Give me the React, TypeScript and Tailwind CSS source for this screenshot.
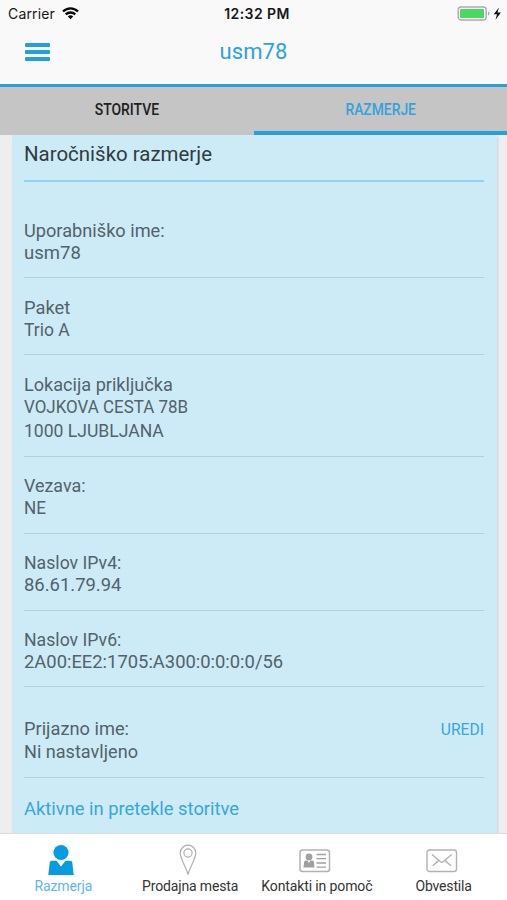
import React from "react";

type Line = { text: string; fit: string };

const rows: { className: string; lines: Line[] }[] = [
  { className: "h-[96px] pt-[38px]", lines: [{ text: "Uporabniško ime:", fit: "scale-x-[0.957]" }, { text: "usm78", fit: "scale-x-[0.975]" }] },
  { className: "h-[77px] pt-[19px]", lines: [{ text: "Paket", fit: "scale-x-[0.965]" }, { text: "Trio A", fit: "scale-x-[0.92]" }] },
  { className: "h-[102px] pt-[19px]", lines: [{ text: "Lokacija priključka", fit: "scale-x-[0.953]" }, { text: "VOJKOVA CESTA 78B", fit: "scale-x-[0.892]" }, { text: "1000 LJUBLJANA", fit: "mt-[2px] scale-x-[0.924]" }] },
  { className: "h-[77px] pt-[18px]", lines: [{ text: "Vezava:", fit: "scale-x-[0.94]" }, { text: "NE", fit: "scale-x-[0.9]" }] },
  { className: "h-[77px] pt-[18px]", lines: [{ text: "Naslov IPv4:", fit: "scale-x-[0.93]" }, { text: "86.61.79.94", fit: "scale-x-[0.97]" }] },
  { className: "h-[76px] pt-[18px]", lines: [{ text: "Naslov IPv6:", fit: "scale-x-[0.93]" }, { text: "2A00:EE2:1705:A300:0:0:0:0/56", fit: "scale-x-[0.967]" }] },
];

function TextLine({ text, fit }: Line) {
  return <div className={`h-[22px] origin-left whitespace-nowrap leading-[22px] ${fit}`}>{text}</div>;
}

function StatusBar() {
  return (
    <div className="grid h-[27px] grid-cols-3 items-center text-[#161616]">
      <div className="flex items-center gap-[7px] pl-[8px]">
        <span className="font-['Inter'] text-[14px] tracking-[0.15px]">Carrier</span>
        <svg width="17" height="13" viewBox="0 0 17 13" fill="none" stroke="#080808" strokeWidth="2.4">
          <path d="M1 4.5C5.2 .3 11.8 .3 16 4.5M3.7 7.4c2.7-2.6 6.9-2.6 9.6 0" />
          <path d="M5.8 9.4c1.6-1.4 3.8-1.4 5.4 0L8.5 12.3z" fill="#080808" stroke="none" />
        </svg>
      </div>
      <div className="whitespace-nowrap pl-[7px] text-center font-['Inter'] text-[14px] font-semibold tracking-[0.4px]">12:32 PM</div>
      <svg className="justify-self-end" width="50" height="18" viewBox="0 0 50 18">
        <rect x="1.2" y="2" width="28" height="13" rx="3" fill="#fff" stroke="#aaa" strokeWidth="1.4" />
        <rect x="3" y="4" width="24" height="9" rx="1" fill="#4bd964" />
        <path d="M31 6.5c2 .6 2 3.4 0 4z" fill="#aaa" />
        <path d="M42 2.5 36.7 9.3h3.3l-1.5 5.5 5.4-7.2h-3.4z" fill="#111" />
      </svg>
    </div>
  );
}

function PersonIcon() {
  return (
    <svg width="26" height="32" viewBox="0 0 26 32" fill="#079be2">
      <circle cx="13" cy="8.5" r="7.6" />
      <path d="M4 16.8h4.5L13 22.5l4.5-5.7H22c1.5 0 2 .7 2.3 2L25.7 31H.3L1.7 18.8c.3-1.3.8-2 2.3-2z" />
      <path d="m10.4 16.7 2.6 5.8 2.6-5.8z" fill="#fff" />
    </svg>
  );
}

function PinIcon() {
  return (
    <svg width="18" height="32" viewBox="0 0 18 32" fill="none" stroke="#b0b0b0" strokeWidth="1.2">
      <path d="M9 30.5C7.5 24 1.2 14.5 1.2 9a7.8 7.8 0 0 1 15.6 0C16.8 14.5 10.5 24 9 30.5z" />
      <circle cx="9" cy="9" r="4.1" />
    </svg>
  );
}

function ContactIcon() {
  return (
    <svg width="32" height="24" viewBox="0 0 32 24">
      <rect x="1" y="1" width="29.5" height="21.5" rx="2.5" fill="none" stroke="#b2b2b2" strokeWidth="1.5" />
      <circle cx="10" cy="8" r="3.4" fill="#a0a0a0" />
      <path d="M6.5 11.5h2L10 14l1.5-2.5h2q1.3 0 1.4 1.5l.6 5.5h-11l.6-5.5q.1-1.5 1.4-1.5z" fill="#a0a0a0" />
      <path d="M17.5 5.5h9.5M17.5 9.7h9.5M17.5 14h9.5M17.5 18.2h9.5" stroke="#a0a0a0" strokeWidth="1.3" />
    </svg>
  );
}

function MailIcon() {
  return (
    <svg width="32" height="24" viewBox="0 0 32 24" fill="none" stroke="#b2b2b2" strokeWidth="1.4">
      <rect x="1" y="1" width="29.5" height="21.5" rx="2.5" />
      <path d="m6 5.5 8.5 7.2q1.3 1 2.6 0l8.5-7.2M6.7 16.8l6-5.2M25 16.8l-6-5.2" />
    </svg>
  );
}

export default function App() {
  return (
    <div className="flex h-[900px] w-[507px] flex-col overflow-hidden bg-[#eeeeee] font-['Roboto','Liberation_Sans',sans-serif]">
      <header className="h-[87px] shrink-0 border-b-[3px] border-[#2b9fdb] bg-[#f9f9f9]">
        <StatusBar />
        <div className="grid h-[50px] grid-cols-[1fr_auto_1fr] items-center">
          <div className="ml-[25px] flex w-[25px] flex-col gap-[3px]">
            <span className="h-[4px] rounded-[1px] bg-[#249fdd]" />
            <span className="h-[4px] rounded-[1px] bg-[#249fdd]" />
            <span className="h-[4px] rounded-[1px] bg-[#249fdd]" />
          </div>
          <h1 className="text-[22px] leading-6 tracking-[0.1px] text-[#2ba3e0]">usm78</h1>
        </div>
      </header>
      <nav className="grid h-[48px] shrink-0 grid-cols-2 bg-[#c5c5c5] text-center text-[16px] font-medium leading-[44px]">
        <div className="pt-[1px] text-[#202020]"><span className="inline-block scale-x-[0.87]">STORITVE</span></div>
        <div className="h-[48px] border-b-4 border-[#259fdd] pt-[1px] leading-[43px] text-[#35a2da]"><span className="inline-block scale-x-[0.866]">RAZMERJE</span></div>
      </nav>
      <main className="ml-3 mr-[10px] flex h-[698px] shrink-0 flex-col bg-[#cdebf6] pl-3 pr-[13px] text-[19px] text-[#53626b] shadow-[1px_2px_2px_rgba(0,0,0,0.12)]">
        <h2 className="h-[47px] border-b-2 border-[#8ad5f2] pt-[7px] text-[21px] leading-6 text-[#303b41]"><span className="inline-block origin-left scale-x-[0.974]">Naročniško razmerje</span></h2>
        {rows.map((row) => (
          <section key={row.lines[0].text} className={`border-b border-[#b3d0dc] ${row.className}`}>
            {row.lines.map((line) => <TextLine key={line.text} {...line} />)}
          </section>
        ))}
        <section className="flex h-[91px] justify-between border-b border-[#b3d0dc] pt-[31px]">
          <div>
            <TextLine text="Prijazno ime:" fit="scale-x-[0.96]" />
            <TextLine text="Ni nastavljeno" fit="mt-[1px] scale-x-[0.952]" />
          </div>
          <div className="origin-right scale-x-[0.92] text-[17px] leading-[23px] text-[#35a6df]">UREDI</div>
        </section>
        <div className="pt-[20px] text-[#35a6df]"><TextLine text="Aktivne in pretekle storitve" fit="scale-x-[0.966]" /></div>
      </main>
      <footer className="relative grid h-[67px] shrink-0 grid-cols-4 border-t border-[#dddddd] bg-white text-center text-[14px] leading-[18px] text-[#343434]">
        <div className="flex flex-col items-center">
          <div className="mr-1 flex h-[42px] items-end"><PersonIcon /></div>
          <span className="pt-[1px] tracking-[-0.1px] text-[#5bb9e9]">Razmerja</span>
        </div>
        <div className="flex flex-col items-center">
          <div className="mr-1 flex h-[42px] items-end"><PinIcon /></div>
          <span className="whitespace-nowrap pt-[1px] tracking-[-0.15px]">Prodajna mesta</span>
        </div>
        <div className="flex flex-col items-center">
          <div className="mr-1 flex h-[42px] items-end pb-[3px]"><ContactIcon /></div>
          <span className="whitespace-nowrap pt-[1px] tracking-[-0.12px]">Kontakti in pomoč</span>
        </div>
        <div className="flex flex-col items-center">
          <div className="mr-1 flex h-[42px] items-end pb-[3px]"><MailIcon /></div>
          <span className="pt-[1px] tracking-[-0.15px]">Obvestila</span>
        </div>
      </footer>
    </div>
  );
}
